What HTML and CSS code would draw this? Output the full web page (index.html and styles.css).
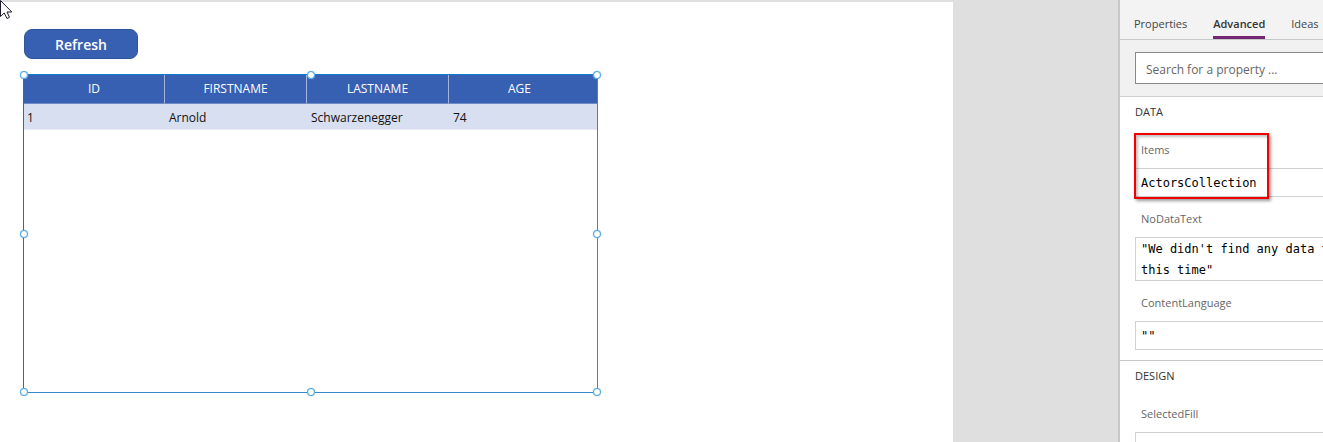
FILE: index.html
```html
<!DOCTYPE html>
<html lang="en">
<head>
<meta charset="utf-8">
<title>App editor</title>
<link rel="stylesheet" href="styles.css">
</head>
<body>
<div class="editor">
  <main class="canvas">
    <div class="screen">
      <button class="refresh" type="button">Refresh</button>
      <div class="selection">
        <table class="data-table">
          <thead>
            <tr><th>ID</th><th>FIRSTNAME</th><th>LASTNAME</th><th>AGE</th></tr>
          </thead>
          <tbody>
            <tr><td>1</td><td>Arnold</td><td>Schwarzenegger</td><td>74</td></tr>
          </tbody>
        </table>
        <span class="handle top left"></span>
        <span class="handle top center"></span>
        <span class="handle top right"></span>
        <span class="handle middle left"></span>
        <span class="handle middle right"></span>
        <span class="handle bottom left"></span>
        <span class="handle bottom center"></span>
        <span class="handle bottom right"></span>
      </div>
    </div>
  </main>
  <aside class="panel">
    <div class="panel-body">
      <nav class="tabs">
        <a class="tab" href="#properties">Properties</a>
        <a class="tab active" href="#advanced">Advanced</a>
        <a class="tab" href="#ideas">Ideas</a>
      </nav>
      <div class="search">
        <input class="search-box" type="text" placeholder="Search for a property ..." aria-label="Search for a property">
      </div>
      <section class="group">
        <h2 class="group-title">DATA</h2>
        <div class="field highlighted">
          <label class="field-label" for="items">Items</label>
          <input class="field-input" id="items" type="text" value="ActorsCollection">
        </div>
        <div class="field">
          <label class="field-label" for="nodata">NoDataText</label>
          <textarea class="field-input tall" id="nodata" rows="2">"We didn't find any data to
this time"</textarea>
        </div>
        <div class="field">
          <label class="field-label" for="language">ContentLanguage</label>
          <input class="field-input" id="language" type="text" value='""'>
        </div>
      </section>
      <section class="group">
        <h2 class="group-title">DESIGN</h2>
        <div class="field">
          <label class="field-label" for="fill">SelectedFill</label>
          <input class="field-input" id="fill" type="text">
        </div>
      </section>
    </div>
  </aside>
</div>
<svg class="cursor" width="13" height="20" viewBox="0 0 13 20" aria-hidden="true">
  <path d="M0.5 0.5V16.5L4.2 13L7 18.5L9.5 17.3L7 12H11.8Z" fill="#fff" stroke="#1d1b2b"/>
</svg>
</body>
</html>
```
FILE: styles.css
```css
*,
*::after {
  box-sizing: border-box;
}

body {
  margin: 0;
  font-family: "Open Sans", "Noto Sans", sans-serif;
  color: #333;
}

.editor {
  display: grid;
  grid-template-columns: 1fr 205px;
  height: 100vh;
  overflow: hidden;
}

.canvas {
  padding: 2px 165px 0 0;
  background: #dfdfdf;
}

.screen {
  height: 100%;
  padding: 27px 24px 0 23px;
  background: #fff;
}

.refresh {
  display: block;
  width: 114px;
  height: 30px;
  margin: 0 0 15px 1px;
  padding: 1px 0 0;
  border: 1px solid #30549c;
  border-radius: 8px;
  background: #3860b2;
  color: #fff;
  font: 600 14px/20px "Open Sans", sans-serif;
}

.selection {
  position: relative;
  width: 575px;
  height: 319px;
  border: 1px solid #2f8ad0;
  border-top-color: #0f7ad0;
  border-left-color: #1572bd;
}

.data-table {
  width: 100%;
  table-layout: fixed;
  border-collapse: separate;
  border-spacing: 0;
  font-size: 12px;
  line-height: 16px;
}

.data-table th {
  width: 142px;
  height: 29px;
  padding: 0;
  border-right: 1px solid #a3b4da;
  border-bottom: 1px solid #6f8bc7;
  background: #3860b2;
  color: #fff;
  font-weight: 400;
}

.data-table th:first-child {
  width: 141px;
}

.data-table th:last-child {
  width: auto;
  padding-right: 7px;
  border-right: 0;
}

.data-table td {
  height: 26px;
  padding: 2px 4px 0;
  border-bottom: 1px solid #e8ebf5;
  background: #d8dff0;
  color: #111;
}

.data-table td:first-child {
  padding-left: 3px;
}

.handle {
  position: absolute;
  width: 8px;
  height: 8px;
  border: 1px solid #4ba3e2;
  border-radius: 50%;
  background: #fff;
  box-shadow: 0 0 1px #62aee5;
}

.top { top: -4px; }
.middle { top: calc(50% - 4px); }
.bottom { bottom: -4px; }
.left { left: -4px; }
.center { left: calc(50% - 4px); }
.right { right: -4px; }

.panel {
  border-left: 2px solid #c8c8c8;
  background: #fff;
  overflow: hidden;
}

.panel-body {
  width: 260px;
}

.tabs {
  display: flex;
  gap: 26px;
  height: 40px;
  padding: 14px 14px 0;
  border-bottom: 1px solid #c8c8c8;
  background: #f3f3f3;
}

.tab {
  height: 25px;
  color: #444;
  font-size: 11px;
  line-height: 20px;
  text-decoration: none;
}

.active {
  border-bottom: 3px solid #742774;
  color: #333;
  font-weight: 600;
}

.search {
  padding: 12px 0 12px 15px;
  border-bottom: 1px solid #d0d0d0;
  background: #f1f1f1;
}

.search-box {
  display: block;
  width: 100%;
  height: 32px;
  padding: 2px 10px 0;
  border: 1px solid #888;
  border-radius: 0;
  background: #fff;
  font: 12px/20px "Open Sans", sans-serif;
}

.search-box::placeholder {
  color: #666;
  opacity: 1;
}

.group {
  padding: 5px 0 10px 15px;
  border-bottom: 1px solid #c8c8c8;
}

.group-title {
  margin: 0 0 9px;
  font-size: 11px;
  font-weight: 400;
  line-height: 20px;
}

.field {
  position: relative;
  padding-top: 12px;
}

.group-title + .field {
  padding-top: 9px;
}

.field-label {
  display: block;
  padding: 0 6px 8px;
  color: #666;
  font-size: 11px;
  line-height: 20px;
}

.field-input {
  display: block;
  width: 100%;
  height: 29px;
  padding: 0 5px;
  border: 1px solid #d0d0d0;
  border-radius: 0;
  background: #fff;
  color: #000;
  font: 12px/21px "DejaVu Sans Mono", monospace;
}

.tall {
  height: 44px;
  padding-top: 1px;
  padding-bottom: 0;
  resize: none;
  overflow: hidden;
}

.highlighted::after {
  content: "";
  position: absolute;
  top: 2px;
  bottom: -2px;
  left: -1px;
  width: 135px;
  border: 2px solid #f00000;
  box-shadow: 2px 2px 3px rgba(0, 0, 0, 0.4), inset 2px 2px 3px rgba(0, 0, 0, 0.25);
  pointer-events: none;
}

.cursor {
  position: absolute;
  top: 0;
  left: 0;
}
```
